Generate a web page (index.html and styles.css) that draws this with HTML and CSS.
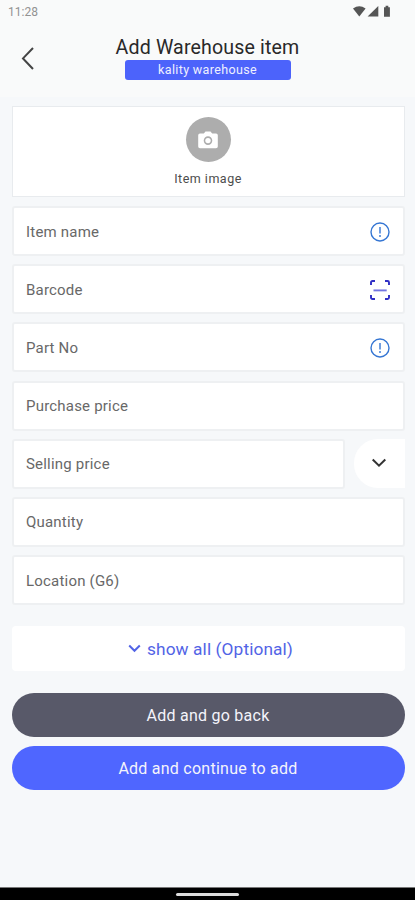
FILE: index.html
```html
<!DOCTYPE html>
<html lang="en">
<head>
<meta charset="utf-8">
<title>Add Warehouse item</title>
<link rel="stylesheet" href="styles.css">
</head>
<body>
<div class="status">
  <span class="time">11:28</span>
  <svg class="status-icons" width="40" height="14" viewBox="0 0 40 14"><path d="M0 3.600Q6.300-1 12.600 3.600L6.300 11.600Z"/><path d="M25.300 1v10.500H14.600Z"/><path d="M31 2.200h1.600V.8h2.700v1.400h1.600v9.500H31Z"/></svg>
</div>
<header class="header">
  <svg class="back" width="16" height="24" viewBox="0 0 16 24"><path d="M13 2 3 12.400 13 23"/></svg>
  <div class="heading">
    <h1>Add Warehouse item</h1>
    <span class="tag">kality warehouse</span>
  </div>
</header>
<main class="main">
  <div class="photo">
    <span class="camera"><svg width="20" height="18" viewBox="0 0 20 18"><path fill-rule="evenodd" d="M2 2.500h3.800L7.500.5h5l1.700 2H18a1.800 1.800 0 0 1 1.800 1.800v11.200a1.800 1.800 0 0 1-1.800 1.800H2A1.800 1.800 0 0 1 .2 15.500V4.300A1.800 1.800 0 0 1 2 2.500ZM10 5.300a4.300 4.300 0 1 0 0 8.600 4.300 4.300 0 0 0 0-8.600Z"/><circle cx="10" cy="9.600" r="2.700"/></svg></span>
    <span class="photo-label">Item image</span>
  </div>
  <div class="fields">
    <div class="field"><span>Item name</span><svg class="info" width="20" height="20" viewBox="0 0 20 20"><circle cx="10" cy="10" r="9"/><path d="M10 5v6.500M10 13v2"/></svg></div>
    <div class="field"><span>Barcode</span><svg class="scan" width="20" height="20" viewBox="0 0 20 20"><path d="M1 5V2.500Q1 1 2.500 1H5M15 1h2.500Q19 1 19 2.500V5M19 15v2.500Q19 19 17.500 19H15M5 19H2.500Q1 19 1 17.500V15"/><path class="scan-line" d="M3.500 10.400h13.200"/></svg></div>
    <div class="field"><span>Part No</span><svg class="info" width="20" height="20" viewBox="0 0 20 20"><circle cx="10" cy="10" r="9"/><path d="M10 5v6.500M10 13v2"/></svg></div>
    <div class="field"><span>Purchase price</span></div>
    <div class="row">
      <div class="field"><span>Selling price</span></div>
      <div class="expand"><svg width="16" height="10" viewBox="0 0 16 10"><path d="M1.700 1.500 8 7.700l6.300-6.200"/></svg></div>
    </div>
    <div class="field"><span>Quantity</span></div>
    <div class="field"><span>Location (G6)</span></div>
  </div>
  <div class="show-all"><svg width="13" height="9" viewBox="0 0 13 9"><path d="M1.200 1.500 6.500 6.800l5.300-5.300"/></svg><span>show all (Optional)</span></div>
  <div class="actions">
    <div class="button dark">Add and go back</div>
    <div class="button blue">Add and continue to add</div>
  </div>
</main>
<footer class="nav"><span class="handle"></span></footer>
</body>
</html>
```
FILE: styles.css
```css
* { box-sizing: border-box; }
body {
  margin: 0;
  height: 900px;
  display: flex;
  flex-direction: column;
  overflow: hidden;
  background: #f6f8fa;
  font-family: Roboto, "Liberation Sans", sans-serif;
}
svg { display: block; flex: none; fill: none; }
.status {
  height: 24px;
  padding: 5px 22px 0 8px;
  display: flex;
  justify-content: space-between;
  background: #f9fafa;
}
.time { font-size: 12px; line-height: 14px; color: #929292; letter-spacing: 0; }
.status .status-icons { fill: #555; }
.header {
  height: 73px;
  display: grid;
  grid-template-columns: 54px 1fr 54px;
  background: #f9fafa;
}
.back { margin: 22px 0 0 20px; stroke: #444; stroke-width: 2; }
.heading { display: flex; flex-direction: column; align-items: center; padding-top: 12px; }
h1 { margin: 0; font-size: 19.600px; line-height: 24px; font-weight: 400; color: #292929; letter-spacing: 0.15px; white-space: nowrap; }
.tag {
  width: 166px;
  height: 20px;
  border-radius: 3px;
  background: #4c63fb;
  color: #eef0ff;
  font-size: 12.500px;
  line-height: 20px;
  letter-spacing: 0.35px;
  text-align: center;
}
.main { flex: 1; padding: 9px 10.500px 0 11.500px; }
.photo {
  height: 91px;
  border: 1px solid #e8ebee;
  background: #fff;
  display: flex;
  flex-direction: column;
  align-items: center;
  padding-top: 10px;
}
.camera {
  width: 45px;
  height: 45px;
  border-radius: 50%;
  background: #adadad;
  display: flex;
  align-items: center;
  justify-content: center;
}
.camera svg { fill: #fff; }
.photo-label { margin-top: 9px; font-size: 12.500px; line-height: 16px; color: #4c4c4c; letter-spacing: 0.5px; }
.fields { margin-top: 9px; display: flex; flex-direction: column; gap: 8.200px; }
.field {
  height: 50px;
  flex: none;
  border: 2px solid #eef0f2;
  border-radius: 3px;
  background: #fff;
  padding: 1px 13px 0 12.500px;
  display: flex;
  align-items: center;
  justify-content: space-between;
  font-size: 15px;
  color: #686868;
  letter-spacing: 0.2px;
}
.info { stroke: #3576d3; stroke-width: 1.400; }
.scan { stroke: #302fc5; stroke-width: 1.900; }
.scan .scan-line { stroke: #7375e2; }
.row { display: flex; gap: 9px; }
.row .field { flex: 1; }
.expand {
  width: 51px;
  height: 49px;
  border-radius: 24px 0 0 24px;
  background: #fff;
  display: flex;
  align-items: center;
  justify-content: center;
}
.expand svg { stroke: #333; stroke-width: 2; }
.show-all {
  margin-top: 21px;
  height: 45px;
  border-radius: 4px;
  background: #fff;
  display: flex;
  align-items: center;
  justify-content: center;
  gap: 6px;
  padding-left: 5px;
  color: #5264e6;
  font-size: 17.300px;
  letter-spacing: 0.1px;
}
.show-all svg { stroke: #5264e6; stroke-width: 2; }
.actions { margin-top: 22px; display: grid; gap: 9px; }
.button {
  height: 44px;
  border-radius: 22px;
  color: #f4f4fb;
  font-size: 16px;
  line-height: 45px;
  text-align: center;
  letter-spacing: 0.25px;
}
.dark { background: #585969; }
.blue { background: #4f66ff; }
.nav {
  height: 13px;
  border-top: 1px solid #777;
  background: #000;
  display: flex;
  justify-content: center;
  padding-top: 5px;
}
.handle { width: 63px; height: 3px; border-radius: 2px; background: #ddd; }
```
